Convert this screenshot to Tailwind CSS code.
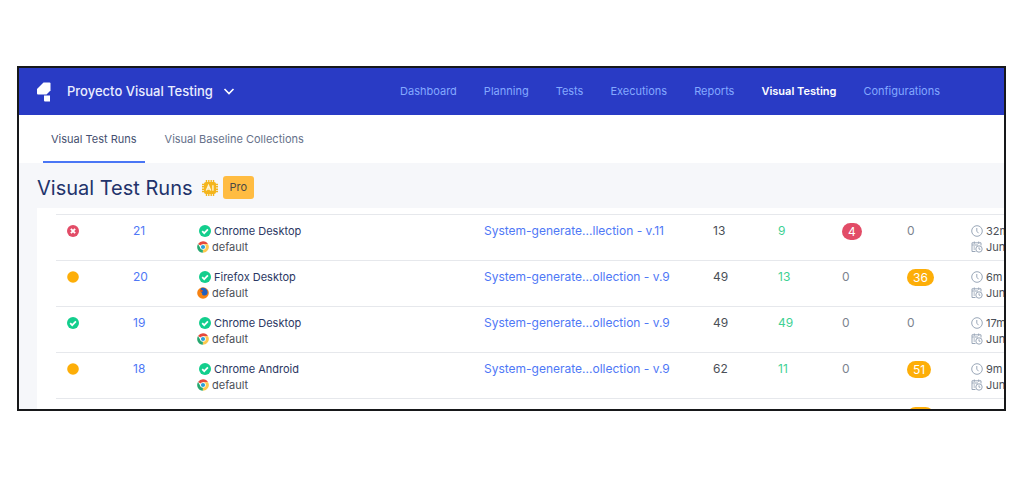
<!DOCTYPE html>
<html lang="en">
  <head>
    <meta charset="UTF-8" />
    <meta name="viewport" content="width=device-width, initial-scale=1.0" />
    <title>Visual Test Runs</title>
    <script src="https://cdn.jsdelivr.net/npm/@tailwindcss/browser@4"></script>
  </head>
  <body class="bg-white font-['Inter',sans-serif] text-xs">
    <!-- shared icons -->
    <svg class="hidden">
      <symbol id="passed" viewBox="0 0 12 12">
        <circle cx="6" cy="6" r="6" fill="#13ce8d" />
        <path d="M3.2 6.2l2 2 3.7-3.8" fill="none" stroke="#fff" stroke-width="1.7" />
      </symbol>
      <symbol id="failed" viewBox="0 0 12 12">
        <circle cx="6" cy="6" r="6" fill="#e24c67" />
        <path d="M3.9 3.9l4.2 4.2M8.1 3.9L3.9 8.1" fill="none" stroke="#fff" stroke-width="1.9" />
      </symbol>
      <symbol id="unresolved" viewBox="0 0 12 12">
        <circle cx="6" cy="6" r="5.8" fill="#fdae08" />
      </symbol>
      <symbol id="chrome" viewBox="0 0 12 12">
        <path d="M6 6L1 3A5.8 5.8 0 0 1 11.1 3.2H6z" fill="#e5483b" />
        <path d="M6 6L6.1 3.2H11.1A5.8 5.8 0 0 1 5.8 11.8z" fill="#fcc94f" />
        <path d="M6 6L5.8 11.8A5.8 5.8 0 0 1 1 3L3.6 7.3z" fill="#27a870" />
        <circle cx="6" cy="6" r="2.8" fill="#fff" />
        <circle cx="6" cy="6" r="2.1" fill="#2a9fd8" />
      </symbol>
      <symbol id="firefox" viewBox="0 0 12 12">
        <circle cx="6" cy="6" r="5.8" fill="#f68212" />
        <path d="M4 1.2C6.5-.2 10.3 1.4 10.6 5 10.8 7.5 8.7 9 6.8 8.5 5.3 8.2 4.5 7 5.4 6.2 3.8 6 3 3.5 4 1.2z" fill="#1f5fc0" />
        <path d="M3.2 2.2C4 3 5 3 6 3.4 5.8 4.5 5 4.4 4.6 5.3 4 5.1 3 4 3.2 2.2z" fill="#e4580c" />
      </symbol>
      <symbol id="clock" viewBox="0 0 12 12">
        <circle cx="6" cy="6" r="5.3" fill="none" stroke="#9aa7b8" />
        <path d="M5.8 3v3.2l1.7 2" fill="none" stroke="#9aa7b8" />
      </symbol>
      <symbol id="calendar" viewBox="0 0 12 12">
        <path d="M4.5 10.5H1V1.8H10V4.5M1 4H7M3.3.5V2.8M7.7.5V2.8M2.5 6H4M2.5 8H4" fill="none" stroke="#9aa7b8" />
        <circle cx="8" cy="8" r="3.2" fill="#fff" stroke="#9aa7b8" />
        <path d="M8 6.3V8.2H9.4" fill="none" stroke="#9aa7b8" />
      </symbol>
    </svg>

    <div class="mt-[66px] ml-[17px] mr-[18px] border-2 border-[#17181a] bg-[#f6f7fa] overflow-hidden">
      <header class="flex items-center justify-between h-[47px] bg-[#293bc5] pl-[18px] pr-16">
        <div class="flex items-center">
          <svg class="w-[14px] h-5 mr-4" viewBox="0 0 14 20" fill="#fff">
            <path d="M6.500.5H12.500Q13.500.5 13.500 1.500V8.500L9.500 12.500H1Q0 12.500 0 11.500V7z" />
            <path d="M7 13.500H13V19.500H8Q7 19.500 7 18.500z" />
          </svg>
          <button class="flex items-center text-[13px] font-medium text-[#e9edff]">
            Proyecto Visual Testing
            <svg class="w-3 h-3 ml-[10px]" viewBox="0 0 12 12" fill="none" stroke="#fff" stroke-width="1.6">
              <path d="M1.5 4l4.5 4.5L10.5 4" />
            </svg>
          </button>
        </div>
        <nav class="flex gap-[27px] text-[11px] text-[#84a9ff] whitespace-nowrap">
          <a href="#">Dashboard</a>
          <a href="#">Planning</a>
          <a href="#">Tests</a>
          <a href="#">Executions</a>
          <a href="#">Reports</a>
          <a href="#" class="font-semibold text-white">Visual Testing</a>
          <a href="#">Configurations</a>
        </nav>
      </header>

      <div class="flex h-12 bg-white pl-6 text-[11px] text-[#66718a]">
        <a href="#" class="flex items-center px-2 pt-[2px] border-b-2 border-[#4a76f5] text-[#465070]">Visual Test Runs</a>
        <a href="#" class="flex items-center ml-3 px-2 pt-[2px] border-b-2 border-transparent">Visual Baseline Collections</a>
      </div>

      <div class="flex items-center h-[45px] pl-[18px] pt-1">
        <h1 class="text-xl text-[#22336b]">Visual Test Runs</h1>
        <svg class="w-4 h-4 ml-[9px]" viewBox="0 0 16 16">
          <path d="M4.5 0V16M6.8 0V16M9.2 0V16M11.5 0V16M0 4.5H16M0 6.8H16M0 9.2H16M0 11.5H16" stroke="#f4b51c" stroke-width="1.4" />
          <rect x="2" y="2" width="12" height="12" rx="2" fill="#f4b51c" />
          <path d="M4.300 10.5L6.500 5.500L8.700 10.500M5.300 9H7.700M10.900 5.300V10.700" fill="none" stroke="#fff3cf" stroke-width="1.4" />
        </svg>
        <span class="ml-[5px] h-[23px] px-[7px] leading-[23px] rounded-[3px] bg-[#ffbc42] text-[11px] text-[#4b4a45]">Pro</span>
      </div>

      <div class="ml-[18px] pl-[19px] pt-[6px] bg-white max-h-[201px] overflow-hidden">
        <table class="w-full table-fixed whitespace-nowrap text-[#4b4f57]">
          <colgroup>
            <col class="w-[77px]" />
            <col class="w-16" />
            <col />
            <col class="w-[229px]" />
            <col class="w-[65px]" />
            <col class="w-16" />
            <col class="w-[65px]" />
            <col class="w-16" />
            <col class="w-[33px]" />
          </colgroup>
          <tbody id="runs"></tbody>
        </table>
      </div>
    </div>

    <script>
      const runs = [
        { status: "failed", id: 21, name: "Chrome Desktop", browser: "chrome", baseline: "System-generate...llection - v.11", total: 13, passed: 9, failed: 4, unresolved: 0, time: "32m" },
        { status: "unresolved", id: 20, name: "Firefox Desktop", browser: "firefox", baseline: "System-generate...ollection - v.9", total: 49, passed: 13, failed: 0, unresolved: 36, time: "6m" },
        { status: "passed", id: 19, name: "Chrome Desktop", browser: "chrome", baseline: "System-generate...ollection - v.9", total: 49, passed: 49, failed: 0, unresolved: 0, time: "17m" },
        { status: "unresolved", id: 18, name: "Chrome Android", browser: "chrome", baseline: "System-generate...ollection - v.9", total: 62, passed: 11, failed: 0, unresolved: 51, time: "9m" },
      ];

      const icon = (name) =>
        `<svg class="w-3 h-3 shrink-0"><use href="#${name}" /></svg>`;

      const count = (value, color) =>
        value
          ? `<span class="inline-block h-[17px] leading-[17px] px-[6px] rounded-full text-white ${color}">${value}</span>`
          : `<span class="text-[#7c838e]">0</span>`;

      const rows = runs.map(
        (run) => `
          <tr class="h-[46px] align-top border-t border-[#e6e8ec]">
            <td class="pt-[10px] pl-[11px]">${icon(run.status)}</td>
            <td class="pt-2"><a href="#" class="text-[#4f78f6]">${run.id}</a></td>
            <td class="pt-2 text-[11px] leading-4">
              <div class="flex items-center gap-[3px] pl-[2px] text-[#2b3763]">${icon("passed")}${run.name}</div>
              <div class="flex items-center gap-[3px]">${icon(run.browser)}default</div>
            </td>
            <td class="pt-2"><a href="#" class="text-[#4f78f6]">${run.baseline}</a></td>
            <td class="pt-2">${run.total}</td>
            <td class="pt-2 text-[#3ed193]">${run.passed}</td>
            <td class="pt-2">${count(run.failed, "bg-[#e24c67]")}</td>
            <td class="pt-2">${count(run.unresolved, "bg-[#fdae08]")}</td>
            <td class="pt-2 text-[11px] leading-4">
              <div class="flex items-center gap-[3px]">${icon("clock")}${run.time}</div>
              <div class="flex items-center gap-[3px]">${icon("calendar")}Jun</div>
            </td>
          </tr>`
      );

      // the next run only peeks out under the fold
      rows.push(`
          <tr class="h-[46px] align-top border-t border-[#e6e8ec]">
            <td colspan="7"></td>
            <td class="pt-2"><span class="block w-[27px] h-[17px] rounded-full bg-[#fdae08]"></span></td>
            <td></td>
          </tr>`);

      document.getElementById("runs").innerHTML = rows.join("");
    </script>
  </body>
</html>
